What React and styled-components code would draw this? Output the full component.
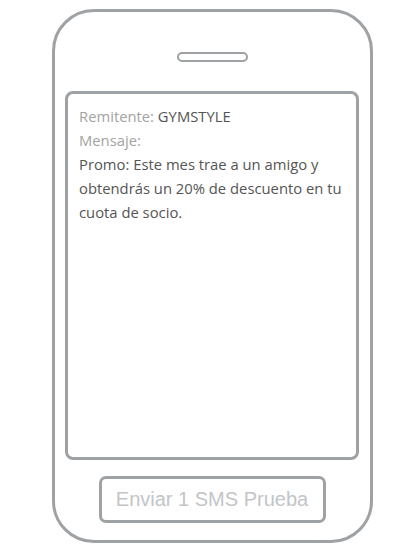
import React from 'react';
import styled, { createGlobalStyle } from 'styled-components';

const GlobalStyle = createGlobalStyle`
    body {
        margin: 0;
        background: #fff;
        font-family: "Open Sans", sans-serif;
    }
`;

const Phone = styled.div`
    box-sizing: border-box;
    width: 321px;
    height: 534px;
    margin: 9px 0 0 52px;
    border: 3px solid #9fa2a4;
    border-radius: 42px;
    display: flex;
    flex-direction: column;
    align-items: center;
    padding: 40px 11px 17px 10px;
`;

const Speaker = styled.div`
    box-sizing: border-box;
    width: 71px;
    height: 10px;
    border: 2px solid #9fa2a4;
    border-radius: 5px;
`;

const Screen = styled.div`
    box-sizing: border-box;
    align-self: stretch;
    height: 369px;
    margin-top: 29px;
    border: 3px solid #9fa2a4;
    border-radius: 8px;
    padding: 10px 4px 10px 11px;
    font-size: 14.8px;
    line-height: 24px;
    color: #555;
`;

const Label = styled.span`
    color: #a3a3a3;
`;

const Line = styled.div`
    margin: 0;
`;

const TestButton = styled.button`
    box-sizing: border-box;
    width: 227px;
    height: 47px;
    margin-top: 16px;
    padding: 0;
    border: 3px solid #9fa2a4;
    border-radius: 7px;
    background: #fff;
    color: #c2c5c8;
    font-family: "Liberation Sans", Arial, sans-serif;
    font-size: 20px;
    cursor: pointer;
`;

const sms = {
    sender: 'GYMSTYLE',
    body: 'Promo: Este mes trae a un amigo y obtendrás un 20% de descuento en tu cuota de socio.',
};

const App = () => (
    <>
        <GlobalStyle />
        <Phone>
            <Speaker />
            <Screen>
                <Line><Label>Remitente: </Label>{sms.sender}</Line>
                <Line><Label>Mensaje:</Label></Line>
                <Line>{sms.body}</Line>
            </Screen>
            <TestButton>Enviar 1 SMS Prueba</TestButton>
        </Phone>
    </>
);

export default App;
